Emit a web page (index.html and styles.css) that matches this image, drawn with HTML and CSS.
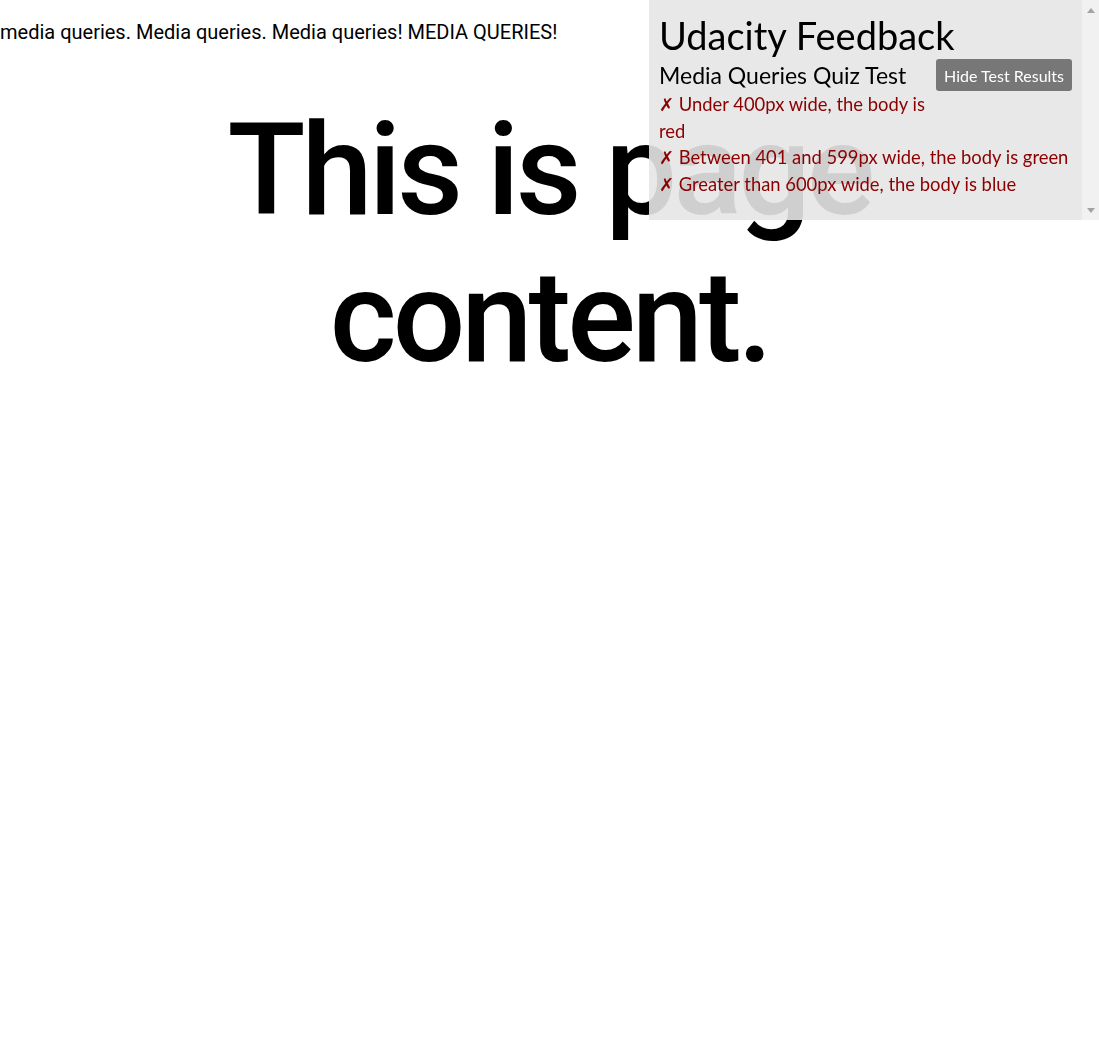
FILE: index.html
```html
<!DOCTYPE html>
<html>
<head>
<meta charset="utf-8">
<link rel="stylesheet" href="styles.css">
</head>
<body>
<p class="intro">media queries. Media queries. Media queries! MEDIA QUERIES!</p>
<h1 class="content">This is page content.</h1>
<div class="feedback">
  <div class="fb-body">
    <div class="fb-title">Udacity Feedback</div>
    <button class="fb-toggle">Hide Test Results</button>
    <div class="fb-quiz">Media Queries Quiz Test</div>
    <div class="fb-item">&#x2717; Under 400px wide, the body is red</div>
    <div class="fb-item">&#x2717; Between 401 and 599px wide, the body is green</div>
    <div class="fb-item">&#x2717; Greater than 600px wide, the body is blue</div>
  </div>
  <div class="fb-scroll">
    <span class="arrow-up"></span>
    <span class="arrow-down"></span>
  </div>
</div>
</body>
</html>
```
FILE: styles.css
```css
html, body {
  margin: 0;
  padding: 0;
  background: #fff;
}
body {
  font-family: Roboto, "Liberation Sans", sans-serif;
  color: #000;
}
.intro {
  margin: 20px 0 0 0;
  font-size: 20px;
}
.content {
  margin: 53px 0 0 0;
  font-size: 128px;
  line-height: 147px;
  letter-spacing: -4px;
  font-weight: 500;
  text-align: center;
}
.feedback {
  position: fixed;
  top: 0;
  right: 0;
  width: 450px;
  height: 220px;
  display: flex;
  font-family: Lato, "Open Sans", sans-serif;
}
.fb-body {
  flex: 1;
  padding-left: 10px;
  background: rgba(229, 229, 229, 0.9);
  overflow: hidden;
}
.fb-scroll {
  width: 17px;
  background: #f1f1f1;
  display: flex;
  flex-direction: column;
  justify-content: space-between;
  align-items: center;
  padding: 8px 0 7px 0;
  box-sizing: border-box;
}
.arrow-up {
  width: 0;
  height: 0;
  border-left: 4px solid transparent;
  border-right: 4px solid transparent;
  border-bottom: 5px solid #a3a3a3;
}
.arrow-down {
  width: 0;
  height: 0;
  border-left: 4px solid transparent;
  border-right: 4px solid transparent;
  border-top: 5px solid #a3a3a3;
}
.fb-title {
  font-size: 38px;
  line-height: 48px;
  margin-top: 11px;
}
.fb-toggle {
  float: right;
  margin: 0 10px 10px 0;
  background: #777;
  color: #fff;
  border: none;
  border-radius: 3px;
  font-family: inherit;
  font-size: 16px;
  height: 32px;
  padding: 0 8px;
}
.fb-quiz {
  font-size: 23px;
  line-height: 32px;
}
.fb-item {
  font-size: 18.4px;
  line-height: 26.6px;
  color: #8b0000;
}
```
